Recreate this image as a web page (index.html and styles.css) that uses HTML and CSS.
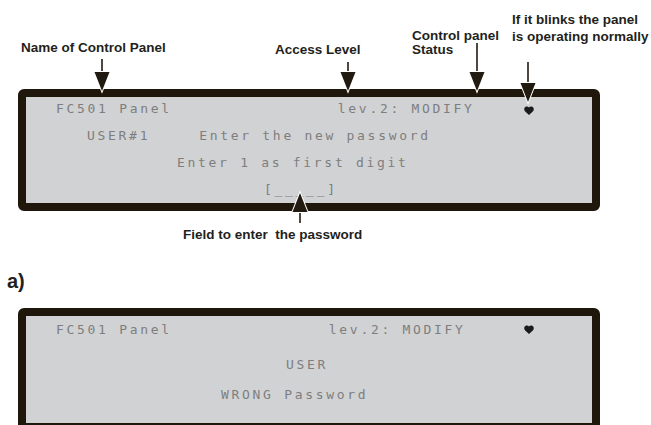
FILE: index.html
```html
<!DOCTYPE html>
<html>
    <head>
        <meta charset="utf-8">
        <title>FC501 Panel - password screens</title>
        <link rel="stylesheet" href="styles.css">
    </head>
    <body>
        <div class="figure">
            <!-- callouts over the display -->
            <span class="callout callout-name">Name of Control Panel</span>
            <span class="callout callout-level">Access Level</span>
            <span class="callout callout-status">Control panel<br>Status</span>
            <span class="callout callout-blink">If it blinks the panel<br>is operating normally</span>

            <svg class="arrows" width="651" height="240" viewBox="0 0 651 240">
                <g stroke="#211a10" stroke-width="1.6">
                    <line x1="102" y1="59" x2="102" y2="74"/>
                    <line x1="348" y1="62" x2="348" y2="74"/>
                    <line x1="477" y1="43" x2="477" y2="74"/>
                    <line x1="528" y1="62" x2="528" y2="85"/>
                    <line x1="300" y1="210" x2="300" y2="223"/>
                </g>
                <g fill="#211a10" stroke="#fff" stroke-width="2" stroke-linejoin="miter" paint-order="stroke">
                    <polygon points="94.5,72 109.5,72 102,91"/>
                    <polygon points="340.5,72 355.5,72 348,91"/>
                    <polygon points="469.5,72 484.5,72 477,91"/>
                    <polygon points="520.5,83 535.5,83 528,102"/>
                    <polygon points="292.5,212 307.5,212 300,193"/>
                </g>
            </svg>

            <div class="lcd lcd-first">
                <div class="row">
                    <span class="name">FC501 Panel</span>
                    <span class="level">lev.2: MODIFY</span>
                    <svg class="beat" width="10" height="9" viewBox="0 0 10 9"><path d="M5 9 L1.2 5.6 C-0.4 4.1 0 1.1 2.2 0.5 C3.4 0.2 4.4 0.7 5 1.5 C5.6 0.7 6.6 0.2 7.8 0.5 C10 1.1 10.4 4.1 8.8 5.6 Z"/></svg>
                </div>
                <div class="row">
                    <span class="user">USER#1</span>
                    <span class="prompt">Enter the new password</span>
                </div>
                <div class="row">
                    <span class="hint">Enter 1 as first digit</span>
                </div>
                <div class="row">
                    <span class="field">[_____]</span>
                </div>
            </div>

            <p class="caption">Field to enter&nbsp; the password</p>
            <p class="fig-label">a)</p>

            <div class="lcd lcd-second">
                <div class="row">
                    <span class="name">FC501 Panel</span>
                    <span class="level">lev.2: MODIFY</span>
                    <svg class="beat" width="10" height="9" viewBox="0 0 10 9"><path d="M5 9 L1.2 5.6 C-0.4 4.1 0 1.1 2.2 0.5 C3.4 0.2 4.4 0.7 5 1.5 C5.6 0.7 6.6 0.2 7.8 0.5 C10 1.1 10.4 4.1 8.8 5.6 Z"/></svg>
                </div>
                <div class="row row-user">
                    <span class="who">USER</span>
                </div>
                <div class="row row-wrong">
                    <span class="wrong">WRONG Password</span>
                </div>
            </div>
        </div>
    </body>
</html>
```

FILE: styles.css
```css
html {
    background-color: #fff;
}
body {
    margin: 0;
    width: 651px;
    height: 425px;
    overflow: hidden;
    font-family: "Liberation Sans", Arial, sans-serif;
    color: #231f20;
}
.figure {
    position: relative;
    padding-top: 89px;
}

/* callouts */
.callout {
    position: absolute;
    font-weight: bold;
    font-size: 13.5px;
    line-height: 14px;
    white-space: nowrap;
}
.callout-name {
    left: 21px;
    top: 41px;
}
.callout-level {
    left: 275px;
    top: 43px;
}
.callout-status {
    left: 412px;
    top: 29px;
}
.callout-blink {
    left: 512px;
    top: 11px;
    line-height: 17px;
}
.arrows {
    position: absolute;
    left: 0;
    top: 0;
    z-index: 2;
    pointer-events: none;
}

/* lcd display */
.lcd {
    box-sizing: border-box;
    width: 582px;
    margin-left: 18px;
    border: 8px solid #1f170b;
    border-radius: 6px;
    background-color: #d1d2d4;
    font-family: "DejaVu Sans Mono", "Liberation Mono", monospace;
    font-size: 13px;
    letter-spacing: 2.7px;
    color: #7e7e7e;
    display: flex;
    flex-direction: column;
}
.lcd-first {
    height: 122px;
    padding-top: 2px;
    gap: 7px;
}
.lcd-second {
    height: 123px;
    padding-top: 4px;
}
.row {
    display: flex;
    align-items: flex-start;
    height: 20px;
    line-height: 20px;
    white-space: pre;
}
.beat {
    fill: #1a1a1a;
    margin-top: 7px;
}
.name {
    margin-left: 30px;
}
.lcd-first .level {
    margin-left: 166px;
}
.lcd-first .beat {
    margin-left: 49px;
}
.user {
    margin-left: 61px;
}
.prompt {
    margin-left: 49px;
}
.hint {
    margin-left: 151px;
}
.field {
    margin-left: 238px;
}
.lcd-second .level {
    margin-left: 157px;
}
.lcd-second .beat {
    margin-left: 58px;
    margin-top: 5px;
}
.row-user {
    margin-top: 15px;
}
.row-wrong {
    margin-top: 10px;
}
.who {
    margin-left: 260px;
}
.wrong {
    margin-left: 195px;
}

.caption {
    margin: 17px 0 0 183px;
    font-weight: bold;
    font-size: 13.5px;
    line-height: 14px;
}
.fig-label {
    margin: 29px 0 17px 7px;
    font-weight: bold;
    font-size: 20px;
    line-height: 20px;
}
```
